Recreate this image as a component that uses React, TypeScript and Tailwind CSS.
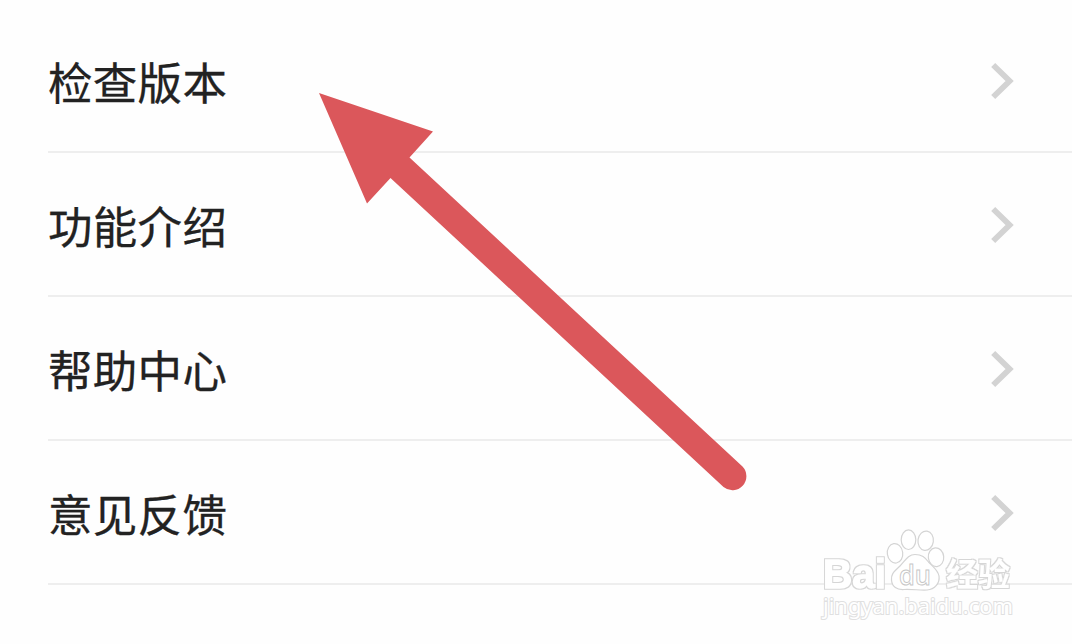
import * as React from "react";

type Item = {
  id: string;
  label: string;
};

const items: Item[] = [
  { id: "version", label: "检查版本" },
  { id: "features", label: "功能介绍" },
  { id: "help", label: "帮助中心" },
  { id: "feedback", label: "意见反馈" },
];

function Chevron() {
  return (
    <svg width="24" height="38" viewBox="0 0 24 38" fill="none" className="mt-px shrink-0">
      <path d="M2.2 3 L18.6 19 L2.2 35" stroke="#d3d3d3" strokeWidth="5.8" />
    </svg>
  );
}

function SettingsRow({ label }: { label: string }) {
  return (
    <button className="flex h-36 w-full items-center justify-between border-b-2 border-[#eeeeee] pr-[57px] text-left">
      <span className="pt-[3px] text-[44.5px] leading-none tracking-[0.3px] text-[#222222] [-webkit-text-stroke:0.3px_#222222]">
        {label}
      </span>
      <Chevron />
    </button>
  );
}

function PointerArrow() {
  return (
    <svg width="1072" height="644" viewBox="0 0 1072 644" className="pointer-events-none absolute inset-0">
      <path
        d="M319 93 L433 131.500 L409.500 157.500 L742.500 466.500 A14 14 0 0 1 723.500 487 L390.500 178 L367 203.500 Z"
        fill="#db575b"
      />
    </svg>
  );
}

function Watermark() {
  return (
    <svg
      width="204"
      height="100"
      viewBox="816 526 204 100"
      className="pointer-events-none absolute left-[816px] top-[526px]"
      fill="#ffffff"
      stroke="#d4d4d4"
      strokeWidth="1.2"
    >
      {/* thin grey contour around the white letters */}
      <filter id="contour" x="-5%" y="-10%" width="110%" height="120%" colorInterpolationFilters="sRGB">
        <feMorphology in="SourceAlpha" operator="dilate" radius="1" result="grown" />
        <feFlood floodColor="#d6d6d6" />
        <feComposite in2="grown" operator="in" result="edge" />
        <feMerge>
          <feMergeNode in="edge" />
          <feMergeNode in="SourceGraphic" />
        </feMerge>
      </filter>
      <g stroke="#ffffff" fontWeight="700" filter="url(#contour)">
        <text
          x="823"
          y="587.5"
          fontSize="40"
          textLength="63"
          lengthAdjust="spacingAndGlyphs"
          strokeWidth="1.3"
          fontFamily="'Liberation Sans', sans-serif"
        >
          Bai
        </text>
        <text x="946" y="585.5" fontSize="32" textLength="64" strokeWidth="0.2" fontFamily="'Noto Sans CJK SC', sans-serif">
          经验
        </text>
      </g>
      {/* paw */}
      <ellipse cx="895" cy="553.3" rx="7.7" ry="9.8" transform="rotate(-8 895 553)" />
      <ellipse cx="908.5" cy="539.7" rx="7.3" ry="9.8" />
      <ellipse cx="925.7" cy="540.7" rx="7.7" ry="9.7" transform="rotate(8 925.5 540.5)" />
      <ellipse cx="936" cy="557.2" rx="7.7" ry="9.4" transform="rotate(-6 936 557)" />
      <path d="M915 554.500 C908 554.500 905 561 900 566 C895 571 891 573 891.500 580 C892 587 897 590 904 589.500 C912 589 920 590.500 927 590 C935 589.500 940 583 939 576 C938 570 932 566 928.500 562 C925 557.500 922 554.500 915 554.500 Z" />
      <text
        x="899"
        y="584.5"
        fontSize="26.5"
        fontWeight="600"
        textLength="32"
        lengthAdjust="spacingAndGlyphs"
        strokeWidth="0.9"
        stroke="#c6c6c6"
        fontFamily="'Open Sans', sans-serif"
      >
        du
      </text>
      <text
        x="823"
        y="614"
        fontSize="22"
        textLength="190"
        lengthAdjust="spacingAndGlyphs"
        stroke="#e0e0e0"
        strokeWidth="2"
        paintOrder="stroke"
        fontFamily="'Noto Sans', 'Open Sans', sans-serif"
      >
        jingyan.baidu.com
      </text>
    </svg>
  );
}

export default function App() {
  return (
    <div
      className="relative h-[644px] w-[1072px] overflow-hidden bg-[#fefefe] pl-12 pt-[9px]"
      style={{ fontFamily: '"Noto Sans CJK SC", sans-serif' }}
    >
      <div className="flex flex-col">
        {items.map((item) => (
          <SettingsRow key={item.id} label={item.label} />
        ))}
      </div>
      <PointerArrow />
      <Watermark />
    </div>
  );
}
